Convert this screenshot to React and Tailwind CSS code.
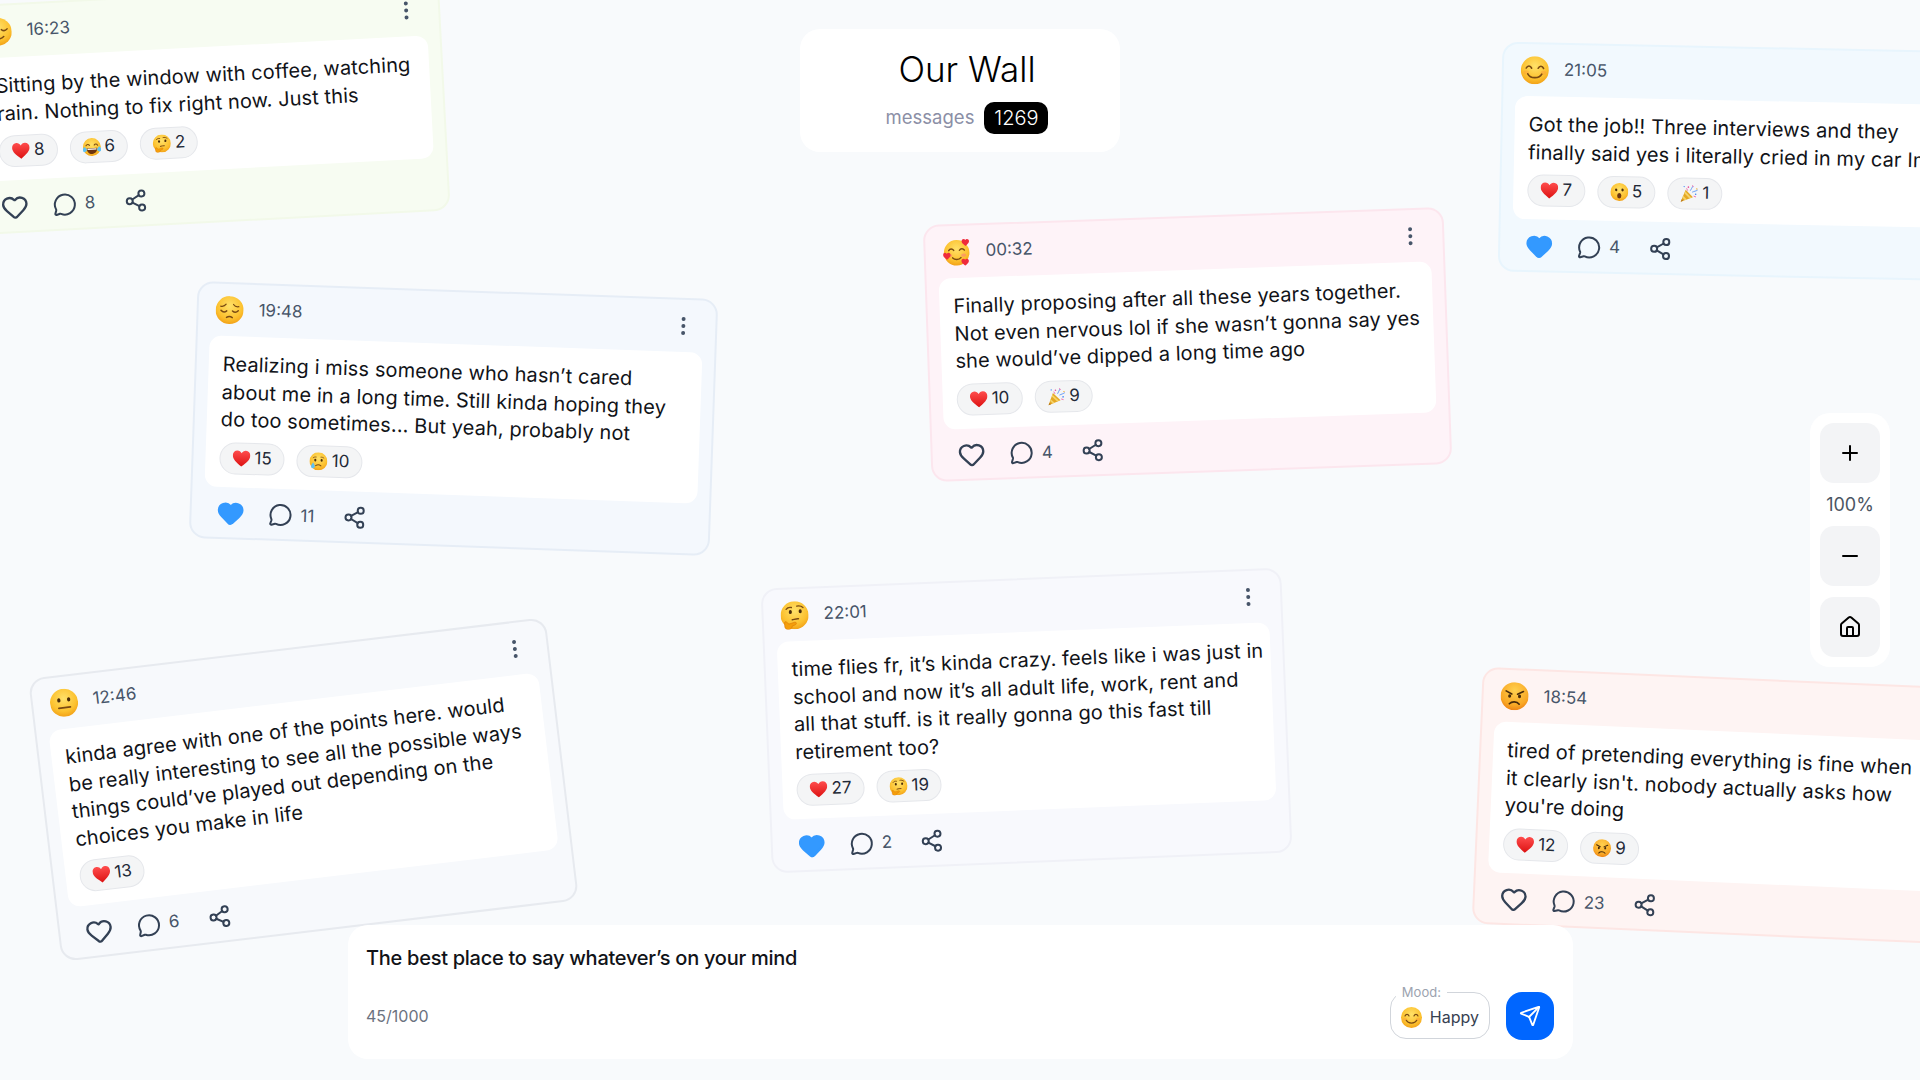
import { Heart, Home, MessageCircle, Minus, MoreVertical, Plus, Send, Share2 } from 'lucide-react';

const Face = ({ fill = 'url(#face)' }) => <circle cx="18" cy="18" r="17" fill={fill} />;
const ink = '#7a4a12';

const emojis = {
    heart: (
        <path d="M18 33C8 25 1.5 19.5 1.5 11.8 1.5 6.6 5.4 3 10 3c3.400 0 6.400 1.800 8 5 1.600-3.200 4.600-5 8-5 4.600 0 8.500 3.600 8.500 8.800C34.500 19.500 28 25 18 33z" fill="url(#heart)" />
    ),
    pensive: (
        <>
            <Face />
            <path d="M7 13.500c2.500.5 5-.3 6.500-2.500M29 13.500c-2.500.5-5-.3-6.500-2.500" stroke={ink} strokeWidth="1.500" fill="none" strokeLinecap="round" />
            <path d="M7.500 18.500c2 2.200 5 2.200 7 .5M28.500 18.500c-2 2.200-5 2.200-7 .5" stroke={ink} strokeWidth="1.800" fill="none" strokeLinecap="round" />
            <path d="M14.500 27c2-1.400 5-1.400 7 0" stroke={ink} strokeWidth="1.800" fill="none" strokeLinecap="round" />
        </>
    ),
    relieved: (
        <>
            <Face />
            <path d="M6.500 15c2 2.200 5 2.200 7 .5M29.500 15c-2 2.200-5 2.200-7 .5" stroke={ink} strokeWidth="1.800" fill="none" strokeLinecap="round" />
            <path d="M11 24c3.500 3.500 10.500 3.500 14 0" stroke={ink} strokeWidth="1.800" fill="none" strokeLinecap="round" />
        </>
    ),
    smile: (
        <>
            <Face />
            <ellipse cx="7.500" cy="21" rx="3.500" ry="2.500" fill="#fb923c" opacity="0.350" />
            <ellipse cx="28.500" cy="21" rx="3.500" ry="2.500" fill="#fb923c" opacity="0.350" />
            <path d="M7.500 15.500c1.500-3.400 5-3.400 6.500 0M22 15.500c1.500-3.400 5-3.400 6.500 0" stroke={ink} strokeWidth="2" fill="none" strokeLinecap="round" />
            <path d="M9.500 22.500c3 6 14 6 17 0" stroke={ink} strokeWidth="2" fill="none" strokeLinecap="round" />
        </>
    ),
    hearts: (
        <>
            <circle cx="18" cy="19" r="15.500" fill="url(#face)" />
            <ellipse cx="9.500" cy="22" rx="3" ry="2" fill="#fb7185" opacity="0.500" />
            <ellipse cx="26.500" cy="22" rx="3" ry="2" fill="#fb7185" opacity="0.500" />
            <path d="M8.500 16c1.500-2.400 4.500-2.400 6 0M21.500 16c1.500-2.400 4.500-2.400 6 0" stroke={ink} strokeWidth="1.800" fill="none" strokeLinecap="round" />
            <path d="M13 25c2.500 2.800 7.500 2.800 10 0" stroke={ink} strokeWidth="1.800" fill="none" strokeLinecap="round" />
            <path d="M29 11c-3-2.400-4.500-3.800-4.500-5.800 0-2.800 3.400-3.600 4.500-1.300 1.100-2.300 4.500-1.500 4.500 1.300 0 2-1.500 3.400-4.500 5.800z" fill="#ef2b3c" />
            <path d="M6 27c-3-2.400-4.500-3.800-4.500-5.800 0-2.800 3.400-3.600 4.500-1.300 1.100-2.300 4.500-1.500 4.500 1.300 0 2-1.500 3.400-4.500 5.800z" fill="#ef2b3c" />
            <path d="M28 35c-3-2.400-4.500-3.800-4.500-5.800 0-2.800 3.400-3.600 4.500-1.300 1.100-2.300 4.500-1.500 4.500 1.300 0 2-1.500 3.400-4.500 5.800z" fill="#ef2b3c" />
        </>
    ),
    neutral: (
        <>
            <Face />
            <ellipse cx="12" cy="14.500" rx="2" ry="2.600" fill="#4a2c0a" />
            <ellipse cx="24" cy="14.500" rx="2" ry="2.600" fill="#4a2c0a" />
            <path d="M11 24h14" stroke={ink} strokeWidth="2.200" strokeLinecap="round" />
        </>
    ),
    thinking: (
        <>
            <Face />
            <path d="M8 10.500c1.500-2 4-2.600 6.500-2M21 7c2.500-.4 5.500 0 7.500 2" stroke={ink} strokeWidth="1.600" fill="none" strokeLinecap="round" />
            <ellipse cx="13" cy="14" rx="1.900" ry="2.400" fill="#4a2c0a" />
            <ellipse cx="25" cy="13.500" rx="1.900" ry="2.400" fill="#4a2c0a" />
            <path d="M15 23.500c2.500-.4 5-1.400 7.500-1" stroke={ink} strokeWidth="1.800" fill="none" strokeLinecap="round" />
            <path d="M9 35c-2.500-.5-3.500-2-3.500-4.500V27c0-1.500 1.200-2 2.200-1.200l3 2.700 7-2c2.200-.5 3 2.100 1 3l-4.200 1.700c-.2 2.600-2 4.300-5.500 4.300z" fill="#f59e0b" stroke="#d97706" strokeWidth="0.700" />
        </>
    ),
    angry: (
        <>
            <Face fill="url(#angry)" />
            <path d="M7.500 12l7 3.500M28.500 12l-7 3.500" stroke="#4a2c0a" strokeWidth="2" strokeLinecap="round" />
            <ellipse cx="12" cy="18" rx="1.900" ry="2.200" fill="#4a2c0a" />
            <ellipse cx="24" cy="18" rx="1.900" ry="2.200" fill="#4a2c0a" />
            <path d="M12 27.500c3-3.500 9-3.500 12 0" stroke="#4a2c0a" strokeWidth="2" fill="none" strokeLinecap="round" />
        </>
    ),
    joy: (
        <>
            <Face />
            <path d="M7 15c1.800-3 5-3 6.500-.5M22.500 14.500c1.500-2.500 4.700-2.500 6.500.5" stroke={ink} strokeWidth="2" fill="none" strokeLinecap="round" />
            <path d="M8 20h20c0 7-4.500 11-10 11S8 27 8 20z" fill="#6b3410" />
            <path d="M9.500 20.500h17v2.500h-17z" fill="#fff" />
            <path d="M4.500 17C.5 19-.5 24 1.500 26s6 .5 7-3.500M31.500 17c4 2 5 7 3 9s-6 .5-7-3.500" fill="#5cc1f5" />
        </>
    ),
    cry: (
        <>
            <Face />
            <path d="M8 11.500c1.500-1.200 3.500-1.700 5.500-1.500M28 11.500c-1.500-1.200-3.500-1.700-5.500-1.500" stroke={ink} strokeWidth="1.500" fill="none" strokeLinecap="round" />
            <ellipse cx="12" cy="16" rx="2" ry="2.400" fill="#4a2c0a" />
            <ellipse cx="24" cy="16" rx="2" ry="2.400" fill="#4a2c0a" />
            <path d="M13 26.500c3-2.500 7-2.500 10 0" stroke={ink} strokeWidth="1.900" fill="none" strokeLinecap="round" />
            <path d="M8 20c-2 3.500-3.500 5.500-3.500 8a3.500 3.500 0 0 0 7 0c0-2.500-1.500-4.500-3.500-8z" fill="#5cc1f5" />
        </>
    ),
    hushed: (
        <>
            <Face />
            <ellipse cx="12" cy="14" rx="2.200" ry="2.800" fill="#4a2c0a" />
            <ellipse cx="24" cy="14" rx="2.200" ry="2.800" fill="#4a2c0a" />
            <ellipse cx="18" cy="25" rx="4" ry="5" fill="#6b3410" />
        </>
    ),
    party: (
        <>
            <path d="M2 34l9-23 14 14z" fill="#e5a823" />
            <path d="M6.500 22.500l7 7-3.500 1.500-5-5zM10 14l12 12-3.500 1.300-9.800-9.800z" fill="#f5d36a" />
            <path d="M2 34l2-5 3 3z" fill="#b7791f" />
            <circle cx="16" cy="6" r="1.500" fill="#ec4899" />
            <circle cx="30" cy="19" r="1.500" fill="#3b82f6" />
            <circle cx="8" cy="5" r="1.200" fill="#3b82f6" />
            <circle cx="32" cy="9" r="1.200" fill="#f59e0b" />
            <path d="M20 12c1-3 3-4 4-7M24 15c3-1.500 6-1.500 9-3.500" stroke="#3b82f6" strokeWidth="1.400" fill="none" strokeLinecap="round" />
            <path d="M13 9l1.500 3M27 23l3 1M24 3l1 2" stroke="#ec4899" strokeWidth="1.400" strokeLinecap="round" />
        </>
    ),
};

const Emoji = ({ name, className }) => (
    <svg viewBox="1 1 34 34" className={`shrink-0 ${className}`}>
        {emojis[name]}
    </svg>
);

const cards = [
    {
        pos: 'w-[476px] left-[-31px] top-[-7px] -rotate-3',
        tone: 'bg-[#f7fcf2] border-[#f2f9e9]',
        emoji: 'relieved',
        time: '16:23',
        lines: ['Sitting by the window with coffee, watching', 'rain. Nothing to fix right now. Just this'],
        reactions: [['heart', 8], ['joy', 6], ['thinking', 2]],
        comments: 8,
    },
    {
        pos: 'w-[521px] left-[193px] top-[290px] rotate-2',
        tone: 'bg-[#f4f8fd] border-[#e6edf6]',
        emoji: 'pensive',
        time: '19:48',
        lines: ['Realizing i miss someone who hasn’t cared', 'about me in a long time. Still kinda hoping they', 'do too sometimes... But yeah, probably not'],
        reactions: [['heart', 15], ['cry', 10]],
        comments: 11,
        liked: true,
    },
    {
        pos: 'w-[521px] left-[927px] top-[216px] -rotate-2',
        tone: 'bg-[#fef3f8] border-[#fce6ee]',
        emoji: 'hearts',
        time: '00:32',
        lines: ['Finally proposing after all these years together.', 'Not even nervous lol if she wasn’t gonna say yes', 'she would’ve dipped a long time ago'],
        reactions: [['heart', 10], ['party', 9]],
        comments: 4,
    },
    {
        pos: 'w-[521px] left-[1500px] top-[47px] rotate-[1.2deg]',
        tone: 'bg-[#f2f9fe] border-[#e8f5fd]',
        emoji: 'smile',
        time: '21:05',
        lines: ['Got the job!! Three interviews and they', 'finally said yes i literally cried in my car Im'],
        reactions: [['heart', 7], ['hushed', 5], ['party', 1]],
        comments: 4,
        liked: true,
    },
    {
        pos: 'w-[521px] left-[43px] top-[647px] rotate-[-6.8deg]',
        tone: 'bg-[#f7f9fc] border-[#e7eaef]',
        emoji: 'neutral',
        time: '12:46',
        lines: ['kinda agree with one of the points here. would', 'be really interesting to see all the possible ways', 'things could’ve played out depending on the', 'choices you make in life'],
        reactions: [['heart', 13]],
        comments: 6,
    },
    {
        pos: 'w-[521px] left-[766px] top-[578px] rotate-[-2.3deg]',
        tone: 'bg-[#f8f9fd] border-[#f0f1f7]',
        emoji: 'thinking',
        time: '22:01',
        lines: ['time flies fr, it’s kinda crazy. feels like i was just in', 'school and now it’s all adult life, work, rent and', 'all that stuff. is it really gonna go this fast till', 'retirement too?'],
        reactions: [['heart', 27], ['thinking', 19]],
        comments: 2,
        liked: true,
    },
    {
        pos: 'w-[521px] left-[1477px] top-[678px] rotate-[2.5deg]',
        tone: 'bg-[#fef4f3] border-[#fde6e4]',
        emoji: 'angry',
        time: '18:54',
        lines: ['tired of pretending everything is fine when', "it clearly isn't. nobody actually asks how", "you're doing"],
        reactions: [['heart', 12], ['angry', 9]],
        comments: 23,
    },
];

function Card({ card }) {
    return (
        <div className={`absolute rounded-2xl border-2 ${card.pos} ${card.tone}`}>
            <div className="flex h-[52px] items-center justify-between pl-[17px] pr-5">
                <div className="flex items-center gap-[15px]">
                    <Emoji name={card.emoji} className="h-7 w-7" />
                    <span className="text-[17px] text-[#475569]">{card.time}</span>
                </div>
                <MoreVertical size={24} strokeWidth={2} className="text-[#475569]" />
            </div>
            <div className="mx-3 rounded-xl bg-white px-[14px] pb-[13px] pt-[15px]">
                <div className="text-[20px] leading-[27.5px] tracking-[0.1px] text-[#111318]">
                    {card.lines.map((line) => (
                        <div key={line} className="whitespace-nowrap">{line}</div>
                    ))}
                </div>
                <div className="mt-2 flex gap-3">
                    {card.reactions.map(([name, count]) => (
                        <div key={name} className="flex h-8 items-center gap-1 rounded-full border border-[#e5e7eb] bg-[#f4f5f6] px-3 text-[17px] text-[#1f2937]">
                            <Emoji name={name} className="h-[18px] w-[18px]" />
                            {count}
                        </div>
                    ))}
                </div>
            </div>
            <div className="flex h-[50.5px] items-center pl-[25px] pt-[3px] text-[17px] text-[#475569]">
                <Heart size={28} strokeWidth={2} className={card.liked ? 'fill-[#3399ff] text-[#3399ff]' : 'text-[#334155]'} />
                <MessageCircle size={24} strokeWidth={2} className="ml-6 text-[#334155]" />
                <span className="ml-2">{card.comments}</span>
                <Share2 size={24} strokeWidth={2} className="ml-7 text-[#334155]" />
            </div>
        </div>
    );
}

export default function App() {
    return (
        <div className="relative h-screen w-screen overflow-hidden bg-[#f8fafc] font-['Inter',sans-serif]">
            <svg className="absolute h-0 w-0">
                <defs>
                    <radialGradient id="face" cx="50%" cy="35%" r="70%">
                        <stop offset="0%" stopColor="#ffe169" />
                        <stop offset="65%" stopColor="#fcc12f" />
                        <stop offset="100%" stopColor="#f09a12" />
                    </radialGradient>
                    <radialGradient id="angry" cx="50%" cy="30%" r="75%">
                        <stop offset="0%" stopColor="#ffd04f" />
                        <stop offset="70%" stopColor="#f9a825" />
                        <stop offset="100%" stopColor="#ea7a10" />
                    </radialGradient>
                    <linearGradient id="heart" x1="0" y1="0" x2="0" y2="1">
                        <stop offset="0%" stopColor="#ff4d4d" />
                        <stop offset="100%" stopColor="#dc1212" />
                    </linearGradient>
                </defs>
            </svg>

            {cards.map((card) => (
                <Card key={card.time} card={card} />
            ))}

            <div className="absolute left-[800px] top-[29px] flex h-[123px] w-[320px] flex-col items-center rounded-[20px] bg-white pl-[14px] pt-5">
                <h1 className="text-[35px] font-light leading-10 text-black">Our Wall</h1>
                <div className="mt-[13px] flex items-center gap-[10px]">
                    <span className="text-[18.5px] text-[#8b8fa6]">messages</span>
                    <span className="flex h-8 w-16 items-center justify-center rounded-[10px] bg-black text-[20px] font-light text-white">1269</span>
                </div>
            </div>

            <div className="absolute left-[1810px] top-[413px] flex w-20 flex-col items-center rounded-[20px] bg-white p-2.5">
                <button className="flex h-[60px] w-[60px] items-center justify-center rounded-[14px] bg-[#f3f4f6] text-black"><Plus size={24} /></button>
                <div className="flex h-[43px] items-center text-lg text-[#4b5563]">100%</div>
                <button className="flex h-[60px] w-[60px] items-center justify-center rounded-[14px] bg-[#f3f4f6] text-black"><Minus size={24} /></button>
                <button className="mt-[11px] flex h-[60px] w-[60px] items-center justify-center rounded-[14px] bg-[#f3f4f6] text-black"><Home size={24} /></button>
            </div>

            <div className="absolute bottom-[21px] left-[348px] w-[1225px] rounded-[20px] bg-white pb-[19px] pl-[18px] pr-[19px] pt-[19px]">
                <div className="text-[20px] font-medium leading-7 tracking-[-0.27px] text-[#111318]">The best place to say whatever’s on your mind</div>
                <div className="mt-3 flex items-end justify-between">
                    <div className="flex h-12 items-center text-base text-[#6b7280]">45/1000</div>
                    <div className="flex items-end gap-4">
                        <fieldset className="mb-px flex h-[55px] items-center rounded-2xl border border-[#d1d5db] px-[10px] pb-[4px]">
                            <legend className="-ml-[5px] px-[6px] text-[13px] leading-4 text-[#9ca3af]">Mood:</legend>
                            <div className="flex items-center gap-2">
                                <Emoji name="smile" className="h-[21px] w-[21px]" />
                                <span className="text-base text-[#374151]">Happy</span>
                            </div>
                        </fieldset>
                        <button className="flex h-12 w-12 items-center justify-center rounded-2xl bg-[#0066ff] text-white"><Send size={22} /></button>
                    </div>
                </div>
            </div>
        </div>
    );
}
